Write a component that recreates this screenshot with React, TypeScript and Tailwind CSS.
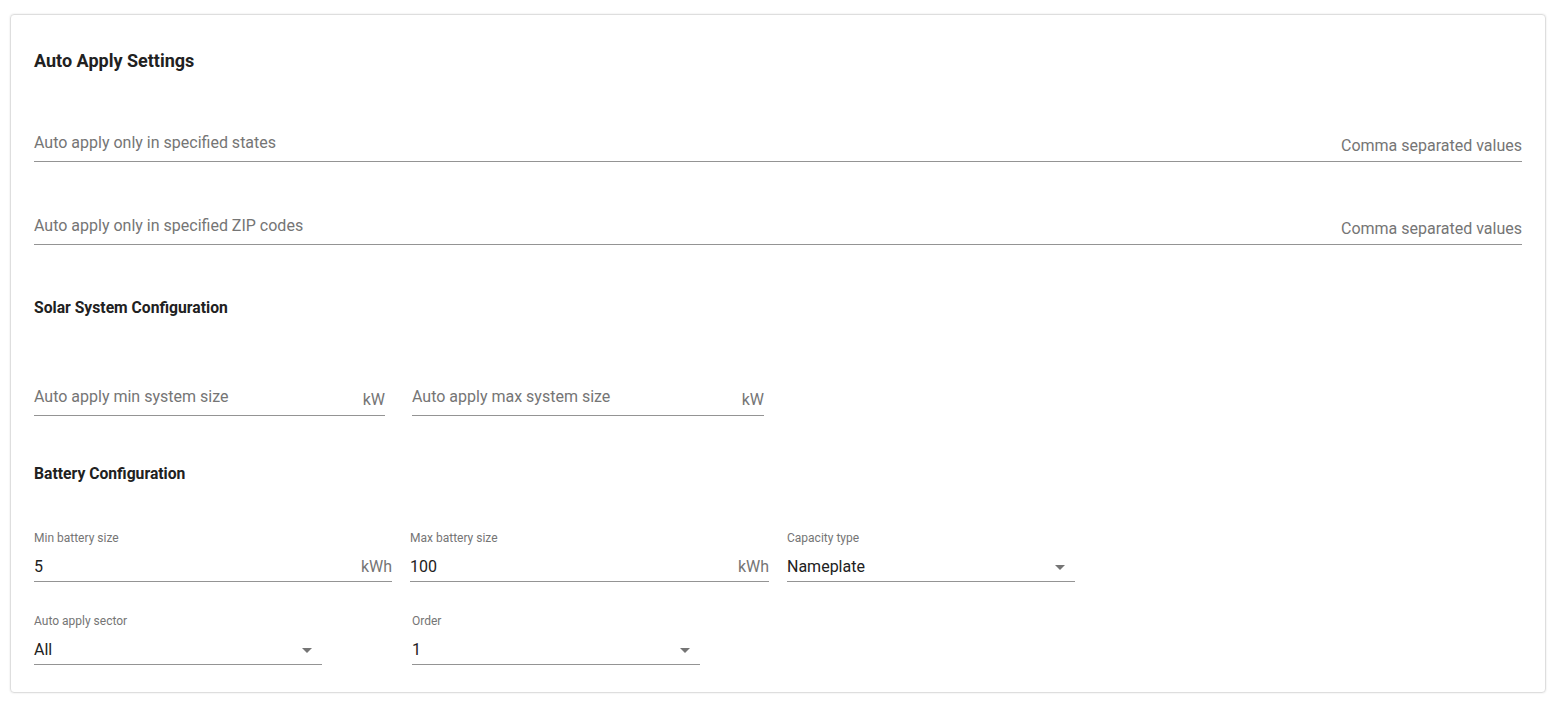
import React from 'react'

function ArrowDrop() {
  return (
    <svg width="24" height="24" viewBox="0 0 24 24" className="fill-[#757575] shrink-0">
      <path d="M7 10l5 5 5-5z" />
    </svg>
  )
}

function TextField({ placeholder, suffix, className = '' }: { placeholder: string; suffix: string; className?: string }) {
  return (
    <div className={`h-[49px] flex items-end justify-between border-b border-[#949494] ${className}`}>
      <span className="pb-[6px] text-[16px] leading-[24px] text-[#757575]">{placeholder}</span>
      <span className="pb-[3px] text-[16px] leading-[24px] text-[#757575]">{suffix}</span>
    </div>
  )
}

function ValueField({ label, value, suffix, className = '' }: { label: string; value: string; suffix?: string; className?: string }) {
  return (
    <div className={`pt-[1px] ${className}`}>
      <div className="text-[12px] leading-[16px] text-[#757575]">{label}</div>
      <div className="mt-[9px] flex items-center justify-between border-b border-[#949494] pb-[2px] h-[27px]">
        <span className="text-[16px] leading-[24px] text-[#212121]">{value}</span>
        {suffix ? (
          <span className="text-[16px] leading-[24px] text-[#757575]">{suffix}</span>
        ) : (
          <span className="mr-[3px]"><ArrowDrop /></span>
        )}
      </div>
    </div>
  )
}

export default function App() {
  return (
    <div className="min-h-screen bg-white px-[10px] pt-[14px] font-['Roboto',sans-serif]">
      <div className="border border-[#dedede] rounded-[4px] shadow-[0_0_2px_rgba(0,0,0,0.12)] px-[23px] pt-[34px] pb-[27px]">
        <h2 className="text-[18px] leading-[24px] font-bold text-[#212121]">Auto Apply Settings</h2>

        <TextField className="mt-[40px]" placeholder="Auto apply only in specified states" suffix="Comma separated values" />
        <TextField className="mt-[34px]" placeholder="Auto apply only in specified ZIP codes" suffix="Comma separated values" />

        <h3 className="mt-[53px] text-[15.7px] leading-[20px] font-bold text-[#212121]">Solar System Configuration</h3>
        <div className="mt-[49px] flex gap-[27px]">
          <TextField className="w-[351px]" placeholder="Auto apply min system size" suffix="kW" />
          <TextField className="w-[352px]" placeholder="Auto apply max system size" suffix="kW" />
        </div>

        <h3 className="mt-[48px] text-[15.7px] leading-[20px] font-bold text-[#212121]">Battery Configuration</h3>
        <div className="mt-[45px] flex gap-[18px]">
          <ValueField className="w-[358px]" label="Min battery size" value="5" suffix="kWh" />
          <ValueField className="w-[359px]" label="Max battery size" value="100" suffix="kWh" />
          <ValueField className="w-[288px]" label="Capacity type" value="Nameplate" />
        </div>
        <div className="mt-[30px] flex gap-[90px]">
          <ValueField className="w-[288px]" label="Auto apply sector" value="All" />
          <ValueField className="w-[288px]" label="Order" value="1" />
        </div>
      </div>
    </div>
  )
}
